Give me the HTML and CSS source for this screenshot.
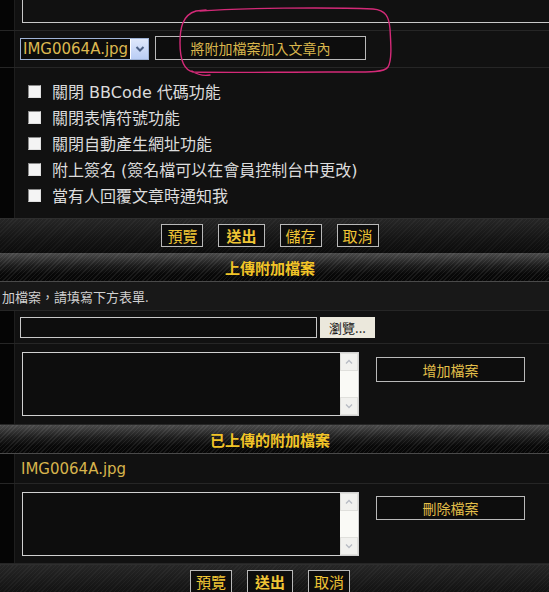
FILE: index.html
```html
<!DOCTYPE html>
<html>
<head>
<meta charset="utf-8">
<link rel="stylesheet" href="styles.css">
</head>
<body>
<div class="page">
  <div class="row r-top">
    <div class="lc"></div>
    <div class="rc"><div class="ta-remnant"></div></div>
  </div>
  <div class="row r-attach">
    <div class="lc"></div>
    <div class="rc">
      <div class="select"><span class="sel-val">IMG0064A.jpg</span><span class="sel-arrow"><svg width="12" height="10" viewBox="0 0 12 10"><path d="M2.5 3 L6 6.5 L9.5 3" fill="none" stroke="#4d6185" stroke-width="2"/></svg></span></div>
      <button class="btn wide insert">將附加檔案加入文章內</button>
    </div>
  </div>
  <div class="row r-opts">
    <div class="lc"></div>
    <div class="rc">
      <label class="opt"><span class="cb"></span>關閉 BBCode 代碼功能</label>
      <label class="opt"><span class="cb"></span>關閉表情符號功能</label>
      <label class="opt"><span class="cb"></span>關閉自動產生網址功能</label>
      <label class="opt"><span class="cb"></span>附上簽名 (簽名檔可以在會員控制台中更改)</label>
      <label class="opt"><span class="cb"></span>當有人回覆文章時通知我</label>
    </div>
  </div>
  <div class="btnbar">
    <div class="btns">
      <button class="btn">預覽</button>
      <button class="btn main">送出</button>
      <button class="btn">儲存</button>
      <button class="btn">取消</button>
    </div>
  </div>
  <div class="hdr"><span>上傳附加檔案</span></div>
  <div class="note"><span>加檔案，請填寫下方表單.</span></div>
  <div class="row r-file">
    <div class="lc"></div>
    <div class="rc">
      <div class="file-input"></div>
      <button class="browse">瀏覽...</button>
    </div>
  </div>
  <div class="row r-ta">
    <div class="lc"></div>
    <div class="rc">
      <div class="ta"><div class="ta-body"></div><div class="sb"><span class="sb-btn"><svg width="10" height="8" viewBox="0 0 10 8"><path d="M2 5.5 L5 2.5 L8 5.5" fill="none" stroke="#b8bcc4" stroke-width="1.3"/></svg></span><span class="sb-btn"><svg width="10" height="8" viewBox="0 0 10 8"><path d="M2 2.5 L5 5.5 L8 2.5" fill="none" stroke="#b8bcc4" stroke-width="1.3"/></svg></span></div></div>
      <button class="btn wide side">增加檔案</button>
    </div>
  </div>
  <div class="hdr"><span>已上傳的附加檔案</span></div>
  <div class="row r-name">
    <div class="lc"></div>
    <div class="rc"><span class="fname">IMG0064A.jpg</span></div>
  </div>
  <div class="row r-ta r-ta2">
    <div class="lc"></div>
    <div class="rc">
      <div class="ta"><div class="ta-body"></div><div class="sb"><span class="sb-btn"><svg width="10" height="8" viewBox="0 0 10 8"><path d="M2 5.5 L5 2.5 L8 5.5" fill="none" stroke="#b8bcc4" stroke-width="1.3"/></svg></span><span class="sb-btn"><svg width="10" height="8" viewBox="0 0 10 8"><path d="M2 2.5 L5 5.5 L8 2.5" fill="none" stroke="#b8bcc4" stroke-width="1.3"/></svg></span></div></div>
      <button class="btn wide side">刪除檔案</button>
    </div>
  </div>
  <div class="btnbar bottom">
    <div class="btns">
      <button class="btn">預覽</button>
      <button class="btn main">送出</button>
      <button class="btn">取消</button>
    </div>
  </div>
  <svg class="annot" width="230" height="80" viewBox="0 0 230 80">
    <path d="M22 6 C60 3 150 2 195 4 C208 5 211 12 212 24 C213 40 214 55 210 62 C206 68 190 67 150 67 C100 67 50 68 15 67 C6 65 2 55 2 38 C2 24 4 10 18 6 L28 5 M14 66 C20 70 26 71 32 70" fill="none" stroke="#d42a78" stroke-width="1.4" stroke-linecap="round"/>
  </svg>
</div>
</body>
</html>
```
FILE: styles.css
```css
html, body {
  margin: 0;
  padding: 0;
  background: #111;
}
body {
  font-family: "DejaVu Sans", "Noto Sans CJK TC", sans-serif;
  color: #d8d8d8;
  overflow: hidden;
  width: 549px;
  height: 592px;
}
.page {
  position: relative;
  width: 549px;
}
.row {
  display: flex;
  border-bottom: 1px solid #262626;
}
.lc {
  width: 14px;
  flex: none;
  background: #050505;
  border-right: 1px solid #1e1e1e;
}
.rc {
  flex: 1;
  background: #111;
  min-width: 0;
}
/* top textarea remnant */
.r-top .rc { height: 30px; }
.ta-remnant {
  margin-left: 7px;
  height: 22px;
  border: 1px solid #c8c8c8;
  border-top: none;
  border-right: none;
}
/* attach row */
.r-attach .rc {
  height: 36px;
  display: flex;
  align-items: center;
  padding-left: 5px;
  gap: 6px;
}
.select {
  display: flex;
  width: 127px;
  height: 20px;
  border: 1px solid #9fb3d6;
  background: #0c0c0c;
}
.sel-val {
  flex: 1;
  font-size: 15px;
  line-height: 20px;
  color: #dcb850;
  padding-left: 2px;
  white-space: nowrap;
  overflow: hidden;
}
.sel-arrow {
  width: 17px;
  flex: none;
  background: linear-gradient(#dfe8fb, #b9cdf5);
  border-left: 1px solid #fff;
  display: flex;
  align-items: center;
  justify-content: center;
}
.btn {
  font-family: "Noto Sans CJK TC", sans-serif;
  background: #0d0d0d;
  border: 1px solid #b9b9b9;
  color: #f0c535;
  font-size: 15px;
  height: 23px;
  padding: 0 5px;
  line-height: 20px;
  margin: 0;
}
.btn.main { font-weight: bold; padding: 0 7px; }
.btn.wide.insert {
  width: 211px;
  height: 24px;
  margin-top: -2px;
  color: #d9b64c;
  font-size: 14px;
}
.btn.side {
  width: 149px;
  height: 25px;
  color: #e3bf4a;
  font-size: 14px;
}
/* options */
.r-opts { border-bottom: none; }
.r-opts .rc {
  padding: 10px 0 10px 13px;
  height: 130px;
}
.opt {
  display: flex;
  align-items: center;
  height: 26px;
  font-family: "DejaVu Sans", "Noto Sans CJK TC", sans-serif;
  font-size: 16px;
  color: #dcdcdc;
  white-space: nowrap;
}
.cb {
  width: 11px;
  height: 11px;
  margin-right: 11px;
  background: #f4f4f4;
  border-top: 1px solid #8a8a8a;
  border-left: 1px solid #8a8a8a;
  border-right: 1px solid #e0e0e0;
  border-bottom: 1px solid #e0e0e0;
}
/* button bars */
.btnbar {
  height: 34px;
  border-top: 1px solid #2e2e2e;
  background:
    repeating-linear-gradient(135deg, rgba(255,255,255,0.035) 0 1px, rgba(0,0,0,0) 1px 3px),
    linear-gradient(#262626, #141414 60%, #0b0b0b);
}
.btns {
  display: flex;
  justify-content: center;
  gap: 15px;
  padding: 5px 9px 0 0;
}
.btnbar.bottom { height: 40px; }
/* headers */
.hdr {
  height: 28px;
  border-bottom: 1px solid #4a4a4a;
  display: flex;
  align-items: center;
  justify-content: center;
  padding-right: 9px;
  background:
    repeating-linear-gradient(135deg, rgba(255,255,255,0.07) 0 1px, rgba(0,0,0,0) 1px 3px),
    linear-gradient(#4a4a4a, #1c1c1c 45%, #080808 75%, #060606);
}
.hdr span {
  font-family: "Noto Sans CJK TC", sans-serif;
  font-weight: bold;
  font-size: 15px;
  color: #f2c427;
}
.note {
  height: 28px;
  border-bottom: 1px solid #262626;
  background: #181818;
  white-space: nowrap;
  display: flex;
  align-items: center;
  padding-left: 2px;
}
.note span {
  font-family: "Noto Sans CJK TC", sans-serif;
  font-size: 13px;
  color: #d0d0d0;
}
/* file row */
.r-file .rc {
  height: 32px;
  display: flex;
  align-items: flex-start;
  padding-left: 5px;
  gap: 3px;
}
.file-input {
  margin-top: 6px;
  width: 295px;
  height: 19px;
  border: 1px solid #c8c8c8;
  background: #0d0d0d;
}
.browse {
  margin: 6px 0 0;
  width: 55px;
  height: 21px;
  border: none;
  background: #ebe8dc;
  color: #111;
  font-family: "Noto Sans CJK TC", sans-serif;
  font-size: 13px;
  padding: 0;
}
/* textarea rows */
.r-ta .rc {
  height: 80px;
  display: flex;
  align-items: flex-start;
  padding-left: 7px;
  gap: 17px;
}
.r-ta2 .rc { height: 79px; }
.ta {
  margin-top: 8px;
  width: 335px;
  height: 62px;
  flex: none;
  border: 1px solid #d0d0d0;
  display: flex;
  background: #0d0d0d;
}
.ta-body { flex: 1; }
.sb {
  width: 18px;
  background: #fafaf6;
  display: flex;
  flex-direction: column;
  justify-content: space-between;
}
.sb-btn {
  height: 16px;
  background: #f1f1ee;
  border: 1px solid #e0e0dc;
  display: flex;
  align-items: center;
  justify-content: center;
}
.side { margin-top: 13px; }
.r-ta2 .side { margin-top: 12px; height: 24px; }
/* name row */
.r-name .rc {
  height: 29px;
  display: flex;
  align-items: center;
  padding-left: 6px;
}
.fname {
  font-size: 15px;
  color: #d7b44c;
  padding-top: 1px;
}
/* annotation */
.annot {
  position: absolute;
  left: 178px;
  top: 5px;
}
```
